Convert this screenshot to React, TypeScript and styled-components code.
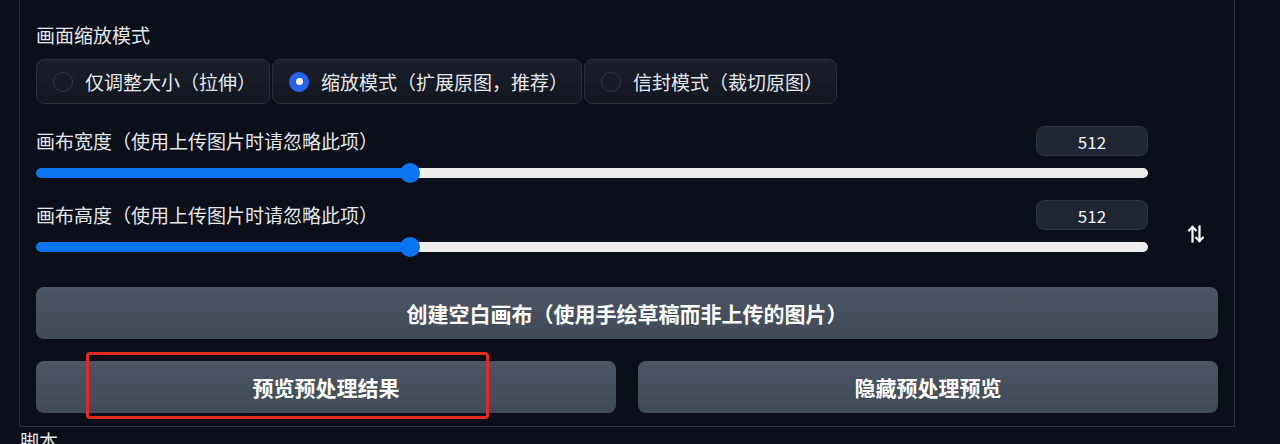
import React, { useState } from 'react';
import styled, { createGlobalStyle } from 'styled-components';

const GlobalStyle = createGlobalStyle`
  html, body {
    margin: 0;
    padding: 0;
    background: #0b0f19;
    overflow: hidden;
  }
  body {
    font-family: 'Noto Sans CJK SC', 'Noto Sans', sans-serif;
    color: #e5e7eb;
  }
`;

const Page = styled.div`
  width: 1280px;
  height: 444px;
  background: #0b0f19;
  padding-left: 19px;
  box-sizing: border-box;
`;

const Panel = styled.div`
  width: 1216px;
  box-sizing: border-box;
  border: 1px solid #2b313d;
  border-top: none;
  padding: 24px 16px 13px 16px;
  display: flex;
  flex-direction: column;
`;

const FieldLabel = styled.div`
  font-size: 19px;
  line-height: 22px;
  color: #e5e7eb;
`;

const RadioGroup = styled.div`
  display: flex;
  gap: 2px;
  margin-top: 13px;
`;

const RadioOption = styled.label`
  display: flex;
  align-items: center;
  gap: 12px;
  height: 45px;
  box-sizing: border-box;
  padding: 0 13px 0 16px;
  border: 1px solid #2a303c;
  border-radius: 8px;
  background: linear-gradient(180deg, #1a1f2b 0%, #12161f 100%);
  font-size: 19px;
  color: #e5e7eb;
  white-space: nowrap;
  cursor: pointer;
`;

const RadioDot = styled.span<{ $checked?: boolean }>`
  width: 20px;
  height: 20px;
  box-sizing: border-box;
  border-radius: 50%;
  flex-shrink: 0;
  display: flex;
  align-items: center;
  justify-content: center;
  border: 1px solid ${p => (p.$checked ? '#2563eb' : '#333a47')};
  background: ${p => (p.$checked ? '#2563eb' : '#151a24')};

  &::after {
    content: '';
    width: 7px;
    height: 7px;
    border-radius: 50%;
    background: #ffffff;
    display: ${p => (p.$checked ? 'block' : 'none')};
  }
`;

const SliderArea = styled.div`
  display: grid;
  grid-template-columns: 1fr 48px;
  column-gap: 22px;
  margin-top: 22px;
`;

const SliderStack = styled.div`
  display: flex;
  flex-direction: column;
  gap: 17px;
`;

const SliderBlock = styled.div`
  display: flex;
  flex-direction: column;
  gap: 7px;
`;

const SliderHead = styled.div`
  display: flex;
  align-items: center;
  justify-content: space-between;
  height: 30px;
`;

const NumberBox = styled.input`
  width: 112px;
  height: 30px;
  box-sizing: border-box;
  border: 1px solid #2b3340;
  border-radius: 8px;
  background: #1e2533;
  color: #f3f4f6;
  font-family: 'Noto Sans CJK SC', 'Noto Sans', sans-serif;
  font-size: 17px;
  text-align: center;
  padding: 0;
  outline: none;
`;

const Range = styled.input<{ $pct: number }>`
  -webkit-appearance: none;
  appearance: none;
  width: 100%;
  height: 20px;
  margin: 0;
  background: transparent;
  outline: none;

  &::-webkit-slider-runnable-track {
    height: 10px;
    border-radius: 5px;
    background: linear-gradient(
      to right,
      #0b74f2 0%,
      #0b74f2 ${p => p.$pct}%,
      #eeeeee ${p => p.$pct}%,
      #eeeeee 100%
    );
  }

  &::-webkit-slider-thumb {
    -webkit-appearance: none;
    width: 20px;
    height: 20px;
    margin-top: -5px;
    border-radius: 50%;
    background: #0b74f2;
    border: none;
  }
`;

const SwapColumn = styled.div`
  display: flex;
  align-items: flex-end;
  justify-content: center;
  padding-bottom: 14px;
`;

const SwapButton = styled.button`
  background: none;
  border: none;
  padding: 0;
  width: 18px;
  height: 18px;
  margin-left: 4px;
  cursor: pointer;
  display: flex;
  align-items: center;
  justify-content: center;
`;

const ActionButton = styled.button`
  height: 52px;
  flex: 1 0 auto;
  border: none;
  border-radius: 8px;
  background: linear-gradient(180deg, #4b5563 0%, #414a57 100%);
  color: #ffffff;
  font-family: 'Noto Sans CJK SC', 'Noto Sans', sans-serif;
  font-size: 21px;
  font-weight: 700;
  padding: 0;
  cursor: pointer;
`;

const WideButton = styled(ActionButton)`
  flex: none;
  width: 100%;
  margin-top: 30px;
`;

const ButtonRow = styled.div`
  position: relative;
  display: flex;
  gap: 22px;
  margin-top: 22px;

  & > button {
    flex: 1 1 0;
  }
`;

const Highlight = styled.div`
  position: absolute;
  left: 50px;
  top: -9px;
  width: 403px;
  height: 67px;
  box-sizing: border-box;
  border: 3.5px solid #e32b22;
  border-radius: 4px;
  pointer-events: none;
`;

const NextSection = styled.div`
  margin: 3px 0 0 1px;
  font-size: 19px;
  line-height: 22px;
  color: #e5e7eb;
`;

const MIN = 0;
const MAX = 1536;

const modes = ['仅调整大小（拉伸）', '缩放模式（扩展原图，推荐）', '信封模式（裁切原图）'];

const SwapIcon = () => (
  <svg width="16" height="18" viewBox="0 0 16 18" fill="none" stroke="#ffffff" strokeWidth="2.2" strokeLinecap="square">
    <path d="M4.5 16.5V2" />
    <path d="M1.2 5.3 4.5 2 7.8 5.3" />
    <path d="M11.5 1.5V16" />
    <path d="M8.2 12.7 11.5 16 14.8 12.7" />
  </svg>
);

const App: React.FC = () => {
  const [mode, setMode] = useState(1);
  const [width, setWidth] = useState(512);
  const [height, setHeight] = useState(512);

  const pct = (v: number) => ((v - MIN) / (MAX - MIN)) * 100;

  return (
    <Page>
      <GlobalStyle />
      <Panel>
        <FieldLabel>画面缩放模式</FieldLabel>
        <RadioGroup>
          {modes.map((m, i) => (
            <RadioOption key={m} onClick={() => setMode(i)}>
              <RadioDot $checked={mode === i} />
              {m}
            </RadioOption>
          ))}
        </RadioGroup>

        <SliderArea>
          <SliderStack>
            <SliderBlock>
              <SliderHead>
                <FieldLabel>画布宽度（使用上传图片时请忽略此项）</FieldLabel>
                <NumberBox value={width} onChange={e => setWidth(Number(e.target.value) || 0)} />
              </SliderHead>
              <Range
                type="range"
                min={MIN}
                max={MAX}
                step={8}
                value={width}
                $pct={pct(width)}
                onChange={e => setWidth(Number(e.target.value))}
              />
            </SliderBlock>
            <SliderBlock>
              <SliderHead>
                <FieldLabel>画布高度（使用上传图片时请忽略此项）</FieldLabel>
                <NumberBox value={height} onChange={e => setHeight(Number(e.target.value) || 0)} />
              </SliderHead>
              <Range
                type="range"
                min={MIN}
                max={MAX}
                step={8}
                value={height}
                $pct={pct(height)}
                onChange={e => setHeight(Number(e.target.value))}
              />
            </SliderBlock>
          </SliderStack>
          <SwapColumn>
            <SwapButton
              onClick={() => {
                setWidth(height);
                setHeight(width);
              }}
            >
              <SwapIcon />
            </SwapButton>
          </SwapColumn>
        </SliderArea>

        <WideButton>创建空白画布（使用手绘草稿而非上传的图片）</WideButton>

        <ButtonRow>
          <ActionButton>预览预处理结果</ActionButton>
          <ActionButton>隐藏预处理预览</ActionButton>
          <Highlight />
        </ButtonRow>
      </Panel>
      <NextSection>脚本</NextSection>
    </Page>
  );
};

export default App;
